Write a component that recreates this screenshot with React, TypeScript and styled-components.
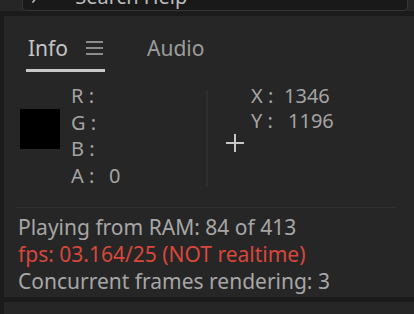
import styled, { createGlobalStyle } from 'styled-components';

const GlobalStyle = createGlobalStyle`
  html, body {
    margin: 0;
    padding: 0;
    background: #1b1b1b;
    overflow: hidden;
  }
  body {
    font-family: "Noto Sans", "Open Sans", sans-serif;
  }
`

const Screen = styled.div`
  width: 414px;
  height: 314px;
  display: flex;
  flex-direction: column;
  gap: 5px;
`

const TopBar = styled.div`
  height: 14px;
  background: #262626;
  padding: 0 6px 0 22px;
  display: flex;
`

const SearchBox = styled.div`
  flex: 1;
  height: 10px;
  background: #191919;
  border: 1px solid #353535;
  border-top: none;
  border-radius: 0 0 5px 5px;
  overflow: hidden;
  display: flex;
  align-items: flex-end;
  gap: 38px;
  padding-left: 8px;
  color: #bdbdbd;
  font-size: 20px;
  line-height: 20px;
`

const SearchText = styled.span`
  margin-bottom: 3px;
`

const Panel = styled.div<{ $h: number }>`
  margin-left: 4px;
  height: ${p => p.$h}px;
  background: #262626;
  display: flex;
  flex-direction: column;
  flex-shrink: 0;
`

const Tabs = styled.div`
  display: flex;
  align-items: flex-end;
  gap: 40px;
  padding: 17px 0 0 22px;
`

const Tab = styled.div<{ $active?: boolean }>`
  display: flex;
  align-items: center;
  gap: 18px;
  padding: 0 2px 6px;
  font-size: 21px;
  line-height: 30px;
  color: ${p => (p.$active ? '#c4c4c4' : '#9c9c9c')};
  border-bottom: 3px solid ${p => (p.$active ? '#c8c8c8' : 'transparent')};
`

const Body = styled.div`
  display: flex;
  padding: 16px 0 0 16px;
  height: 119px;
`

const ColorCol = styled.div`
  width: 186px;
  display: flex;
  align-items: flex-start;
  gap: 11px;
`

const Swatch = styled.div`
  width: 40px;
  height: 40px;
  margin-top: 21px;
  background: #000;
`

const Readout = styled.div`
  display: flex;
  flex-direction: column;
  color: #a4a4a4;
  font-size: 20px;
  line-height: 26.5px;
  margin-top: -5px;
`

const Row = styled.div`
  display: flex;
`

const Key = styled.span<{ $w: number }>`
  display: inline-block;
  width: ${p => p.$w}px;
`

const Divider = styled.div`
  width: 2px;
  margin-top: 2px;
  height: 97px;
  background: #2d2d2d;
`

const PosCol = styled.div`
  display: flex;
  flex-direction: column;
  padding-left: 43px;
  color: #a4a4a4;
  font-size: 20px;
  line-height: 25px;
  margin-top: -5px;
`

const Cross = styled.div`
  margin: -1px 0 0 -25px;
  width: 18px;
  height: 18px;
`

const Rule = styled.div`
  margin: 0 18px 0 12px;
  height: 1px;
  background: #303030;
`

const Status = styled.div`
  display: flex;
  flex-direction: column;
  padding: 6px 0 0 14px;
  font-size: 21px;
  line-height: 27px;
  color: #a6a6a6;
`

const Warn = styled.div`
  color: #d9463b;
`

const MenuIcon = () => (
  <svg width="17" height="14" viewBox="0 0 17 14">
    <g stroke="#a8a8a8" strokeWidth="1.6">
      <line x1="0" y1="1" x2="17" y2="1" />
      <line x1="0" y1="7" x2="17" y2="7" />
      <line x1="0" y1="13" x2="17" y2="13" />
    </g>
  </svg>
)

const App = () => {
  return (
    <Screen>
      <GlobalStyle />
      <TopBar>
        <SearchBox>
          <SearchText>›</SearchText>
          <SearchText>Search Help</SearchText>
        </SearchBox>
      </TopBar>
      <Panel $h={281}>
        <Tabs>
          <Tab $active>
            Info
            <MenuIcon />
          </Tab>
          <Tab>Audio</Tab>
        </Tabs>
        <Body>
          <ColorCol>
            <Swatch />
            <Readout>
              <Row><Key $w={38}>R :</Key></Row>
              <Row><Key $w={38}>G :</Key></Row>
              <Row><Key $w={38}>B :</Key></Row>
              <Row><Key $w={38}>A :</Key>0</Row>
            </Readout>
          </ColorCol>
          <Divider />
          <PosCol>
            <Row><Key $w={33}>X :</Key>1346</Row>
            <Row><Key $w={37}>Y :</Key>1196</Row>
            <Cross>
              <svg width="18" height="18" viewBox="0 0 18 18">
                <g stroke="#c8c8c8" strokeWidth="2">
                  <line x1="9" y1="0" x2="9" y2="18" />
                  <line x1="0" y1="9" x2="18" y2="9" />
                </g>
              </svg>
            </Cross>
          </PosCol>
        </Body>
        <Rule />
        <Status>
          <div>Playing from RAM: 84 of 413</div>
          <Warn>fps: 03.164/25 (NOT realtime)</Warn>
          <div>Concurrent frames rendering: 3</div>
        </Status>
      </Panel>
      <Panel $h={20} />
    </Screen>
  )
}

export default App;
